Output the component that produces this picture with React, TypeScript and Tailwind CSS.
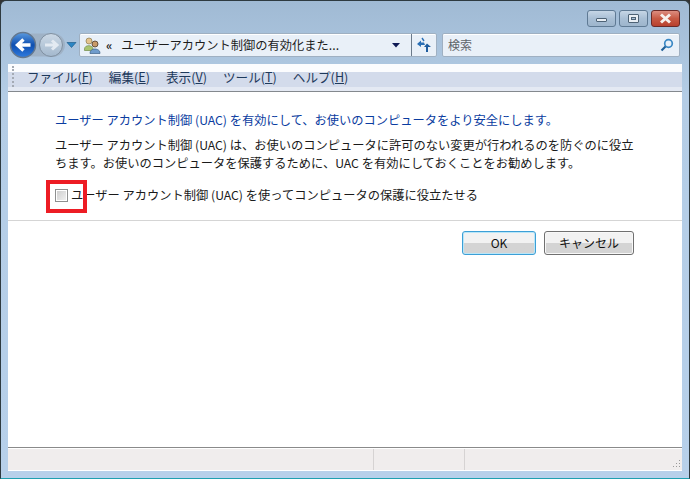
const font = { fontFamily: '"Noto Sans CJK JP", "Liberation Sans", sans-serif' };

function WindowButtons() {
  return (
    <div className="flex justify-end gap-[3px] pr-[9px] pt-[9px] h-[32px]">
      <div className="w-[29px] h-[17px] rounded-[3px] border border-[#5f7a94] bg-gradient-to-b from-[#c6d6e6] via-[#a9bfd5] to-[#9db5cc] flex items-center justify-center">
        <div className="w-[11px] h-[4px] mt-[3px] bg-[#e8eef4] border border-[#4d6275] rounded-[1px]" />
      </div>
      <div className="w-[29px] h-[17px] rounded-[3px] border border-[#5f7a94] bg-gradient-to-b from-[#c6d6e6] via-[#a9bfd5] to-[#9db5cc] flex items-center justify-center">
        <div className="w-[11px] h-[9px] bg-[#e8eef4] border border-[#4d6275] rounded-[1px] flex items-center justify-center">
          <div className="w-[5px] h-[3px] bg-[#a9bfd5] border border-[#4d6275]" />
        </div>
      </div>
      <div className="w-[29px] h-[17px] rounded-[3px] border border-[#6b2a28] bg-gradient-to-b from-[#dc8d80] via-[#c75a45] to-[#b8402e] flex items-center justify-center">
        <svg width="13" height="11" viewBox="0 0 13 11">
          <path d="M2 1.5 L11 9.5 M11 1.5 L2 9.5" stroke="#f6f1ee" strokeWidth="3" />
        </svg>
      </div>
    </div>
  );
}

function NavButtons() {
  return (
    <div className="flex items-center w-[78px] shrink-0">
      <svg width="78" height="28" viewBox="0 0 78 28">
        <defs>
          <linearGradient id="backFill" x1="0" y1="0" x2="0" y2="1">
            <stop offset="0" stopColor="#5b9be0" />
            <stop offset="0.5" stopColor="#0f4fb0" />
            <stop offset="1" stopColor="#2f7ce0" />
          </linearGradient>
          <linearGradient id="fwdFill" x1="0" y1="0" x2="0" y2="1">
            <stop offset="0" stopColor="#ccd9e6" />
            <stop offset="1" stopColor="#a3b8cd" />
          </linearGradient>
        </defs>
        <rect x="20" y="2.5" width="44" height="23" rx="11.5" fill="#9fb2c6" />
        <circle cx="50" cy="14" r="11.5" fill="url(#fwdFill)" stroke="#7f8fa0" />
        <path d="M44 14 H55 M51 9.5 L56 14 L51 18.5" stroke="#e3eaf2" strokeWidth="3" fill="none" />
        <circle cx="22" cy="14" r="12.5" fill="url(#backFill)" stroke="#64788f" strokeWidth="1.5" />
        <path d="M29.5 14 H17.5 M22.5 8.5 L16.5 14 L22.5 19.5" stroke="#ffffff" strokeWidth="3.4" fill="none" />
        <path d="M66 11.5 H75 L70.5 16.5 Z" fill="#2b86c5" stroke="#14537f" strokeWidth="0.6" />
      </svg>
    </div>
  );
}

function UsersIcon() {
  return (
    <svg width="18" height="18" viewBox="0 0 18 18" className="shrink-0">
      <circle cx="6" cy="5" r="3" fill="#e5c48e" stroke="#8a7a4a" strokeWidth="0.7" />
      <path d="M1.5 13 C1.5 8.5 10 8.5 10 13 V14.5 H1.5 Z" fill="#a9c46f" stroke="#6f8a47" strokeWidth="0.7" />
      <circle cx="12" cy="8" r="3" fill="#c99a68" stroke="#4d3a2a" strokeWidth="0.8" />
      <path d="M7 17.5 C6.5 11.5 17.5 11.5 17 17.5 Z" fill="#6f9ccc" stroke="#3d618a" strokeWidth="0.7" />
    </svg>
  );
}

function AddressBar() {
  return (
    <div className="flex h-[24px] w-[358px] shrink-0 items-center rounded-[2px] border border-[#9fb0c2] bg-[#e9f0f8] shadow-[inset_0_1px_0_#fff]">
      <div className="ml-[3px]">
        <UsersIcon />
      </div>
      <span className="ml-[5px] text-[12px] font-bold leading-none text-[#222]">«</span>
      <span className="ml-[9px] flex-1 whitespace-nowrap text-[12.25px] leading-none text-[#1d1d1d]">
        ユーザーアカウント制御の有効化また...
      </span>
      <svg width="9" height="5" viewBox="0 0 9 5" className="mr-[10px]">
        <path d="M0 0 H8 L4 4.5 Z" fill="#0f1a55" />
      </svg>
      <div className="flex h-full w-[25px] items-center justify-center border-l border-[#6b7a8a]">
        <svg width="16" height="16" viewBox="0 0 16 16">
          <path d="M1 7 L5 3.5 V5.5 H8 L9 8 H5 V10 Z" fill="#2a6fb5" />
          <path d="M15 10 L11 6.5 L8 10 H10 V15 H12 V10 Z" fill="#1d5c9f" />
          <path d="M6 1 L8 4" stroke="#2a6fb5" strokeWidth="1.4" />
        </svg>
      </div>
    </div>
  );
}

function SearchBox() {
  return (
    <div className="flex h-[24px] w-[238px] shrink-0 items-center rounded-[2px] border border-[#9fb0c2] bg-[#e9f0f8] pl-[5px] pr-[5px] shadow-[inset_0_1px_0_#fff]">
      <span className="flex-1 text-[12px] leading-none text-[#5f6468]">検索</span>
      <svg width="14" height="14" viewBox="0 0 14 14">
        <circle cx="8.5" cy="5.5" r="3.8" fill="none" stroke="#3b88c4" strokeWidth="1.7" />
        <path d="M5.5 8.5 L1.5 12.5" stroke="#1f5f97" strokeWidth="2.2" />
      </svg>
    </div>
  );
}

function MenuItem({ label, hotkey }: { label: string; hotkey: string }) {
  return (
    <span className="text-[12.6px] leading-none text-[#1e395b]">
      {label}(<span className="underline">{hotkey}</span>)
    </span>
  );
}

function Toolbar() {
  return (
    <div className="relative flex h-[28px] items-center gap-[16px] border-b border-[#84898e] bg-[linear-gradient(#fbfcfe_0_30%,#d3dbeb_30%_85%,#e4e9f3_85%)] pb-[1px] pl-[19px]">
      <div className="absolute left-[4px] top-[2px] h-[21px] w-[2px] border-l-2 border-dotted border-[#a4aab4]" />
      <MenuItem label="ファイル" hotkey="F" />
      <MenuItem label="編集" hotkey="E" />
      <MenuItem label="表示" hotkey="V" />
      <MenuItem label="ツール" hotkey="T" />
      <MenuItem label="ヘルプ" hotkey="H" />
    </div>
  );
}

function Content() {
  return (
    <div className="flex-1 bg-white text-[12.25px] text-[#1a1a1a]">
      <div className="pl-[47px] pr-[46px] pt-[19px]">
        <p className="h-[18px] leading-[18px] text-[#0a3ca0]">
          ユーザー アカウント制御 (UAC) を有効にして、お使いのコンピュータをより安全にします。
        </p>
        <p className="mt-[7px] leading-[18px]">
          ユーザー アカウント制御 (UAC) は、お使いのコンピュータに許可のない変更が行われるのを防ぐのに役立ちます。お使いのコンピュータを保護するために、UAC を有効にしておくことをお勧めします。
        </p>
        <div className="relative mt-[14px] flex h-[18px] items-center">
          <div className="flex h-[13px] w-[13px] items-center justify-center border border-[#8e8f8f] bg-white">
            <div className="h-[9px] w-[9px] bg-gradient-to-br from-[#cfcfcf] to-[#efefef]" />
          </div>
          <span className="ml-[3px] leading-[18px]">
            ユーザー アカウント制御 (UAC) を使ってコンピュータの保護に役立たせる
          </span>
          <div className="absolute left-[-9px] top-[-6px] h-[33px] w-[41px] border-[4px] border-[#ed1c24]" />
        </div>
      </div>
      <div className="mt-[16px] border-t border-[#d5d5d5]" />
      <div className="mt-[10px] flex justify-end gap-[8px] pr-[48px]">
        <button className="h-[24px] w-[74px] rounded-[3px] border border-[#3c9fd6] bg-gradient-to-b from-[#f2f2f2] from-50% to-[#d4d4d4] to-50% text-[12px] leading-none text-[#111] shadow-[inset_0_0_0_1px_#b9e6f8]">
          OK
        </button>
        <button className="h-[24px] w-[90px] rounded-[3px] border border-[#707070] bg-gradient-to-b from-[#f2f2f2] from-50% to-[#d4d4d4] to-50% text-[12px] leading-none text-[#111] shadow-[inset_0_0_0_1px_#f8f8f8]">
          キャンセル
        </button>
      </div>
    </div>
  );
}

function StatusBar() {
  return (
    <div className="border-t border-[#8a8a8a] bg-white pt-[1px] pb-[1px]">
      <div className="flex h-[21px] bg-[#f0eded]">
        <div className="w-[366px] border-r border-[#d6d3d3]" />
        <div className="w-[91px] border-r border-[#d6d3d3]" />
        <div className="flex flex-1 items-end justify-end pr-[1px] pb-[1px]">
          <svg width="8" height="10" viewBox="0 0 8 10">
            <path d="M6 1h1v1H6zM6 4h1v1H6zM3 4h1v1H3zM6 7h1v1H6zM3 7h1v1H3zM0 7h1v1H0z" fill="#9a9a9a" />
          </svg>
        </div>
      </div>
    </div>
  );
}

export default function App() {
  return (
    <div className="h-[479px] w-[690px] bg-[#333]">
      <div
        style={font}
        className="flex h-full w-full flex-col overflow-hidden rounded-t-[6px] border border-[#2e3a40] border-b-[#1fa0b0] bg-gradient-to-b from-[#a0bad4] via-[#b4cde6] via-20% to-[#b7d0ea]"
      >
        <WindowButtons />
        <div className="flex h-[24px] items-center">
          <NavButtons />
          <div className="flex gap-[5px]">
            <AddressBar />
            <SearchBox />
          </div>
        </div>
        <div className="mx-[7px] mb-[7px] mt-[7px] flex flex-1 flex-col">
          <Toolbar />
          <Content />
          <StatusBar />
        </div>
      </div>
    </div>
  );
}
